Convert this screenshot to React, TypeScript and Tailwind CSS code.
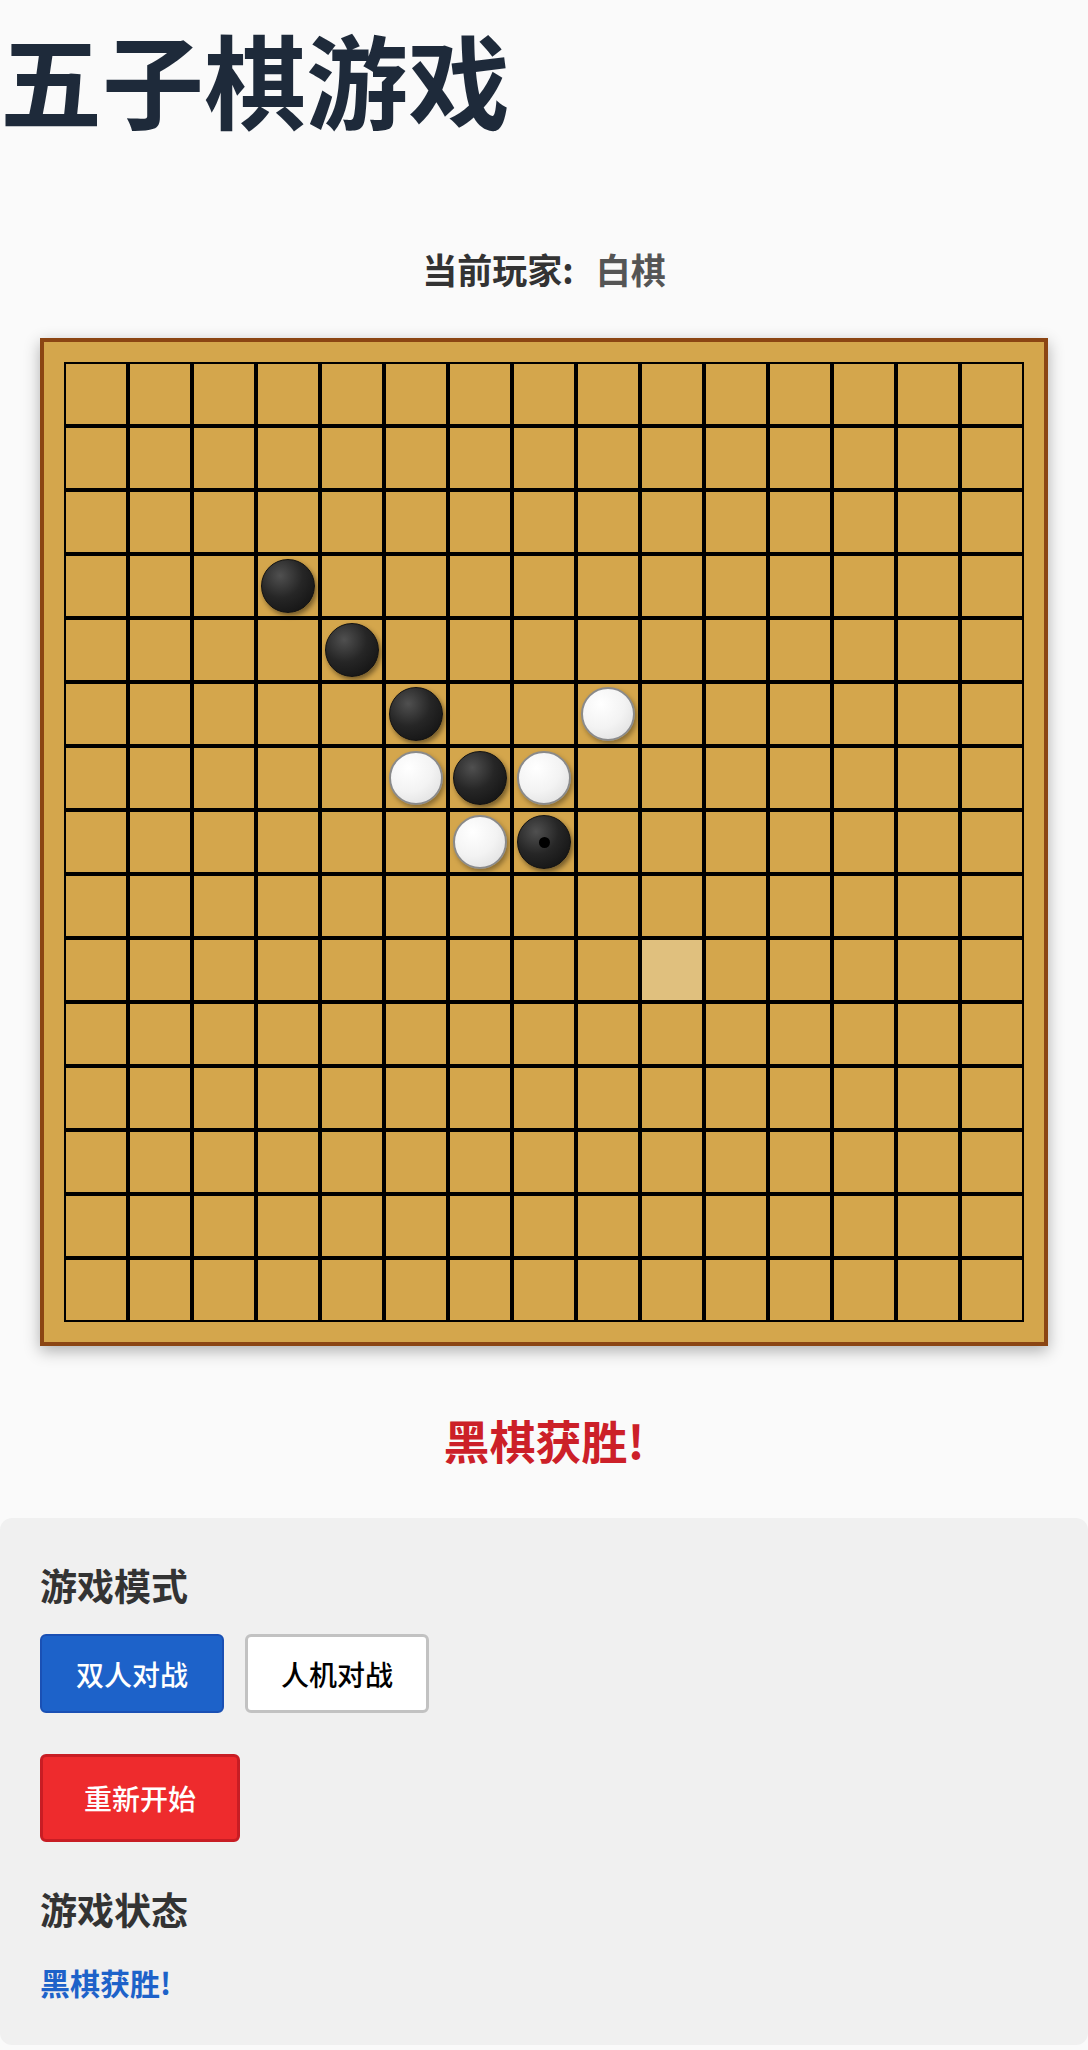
import React from 'react';

type Stone = 'black' | 'white';

const SIZE = 15;

// row, col
const MOVES: [number, number, Stone][] = [
  [3, 3, 'black'],
  [4, 4, 'black'],
  [5, 5, 'black'],
  [5, 8, 'white'],
  [6, 5, 'white'],
  [6, 6, 'black'],
  [6, 7, 'white'],
  [7, 6, 'white'],
  [7, 7, 'black'],
];

const LAST_MOVE = [7, 7];
const HOVER_CELL = [9, 9];

const buildBoard = () => {
  const board: (Stone | null)[][] = Array.from({ length: SIZE }, () => Array(SIZE).fill(null));
  MOVES.forEach(([r, c, s]) => {
    board[r][c] = s;
  });
  return board;
};

const Piece = ({ color, last }: { color: Stone; last?: boolean }) => {
  if (color === 'black') {
    return (
      <div className="flex items-center justify-center w-[54px] h-[54px] rounded-full border border-[#111] bg-[radial-gradient(circle_at_35%_30%,#505050_0%,#262626_45%,#0d0d0d_100%)] shadow-[2px_3px_5px_rgba(0,0,0,0.45)]">
        {last && <div className="w-[11px] h-[11px] rounded-full bg-black" />}
      </div>
    );
  }
  return (
    <div className="w-[54px] h-[54px] rounded-full border-2 border-[#8a8a8a] bg-[radial-gradient(circle_at_35%_30%,#ffffff_0%,#f3f3f3_50%,#dadada_100%)] shadow-[2px_3px_5px_rgba(0,0,0,0.35)]" />
  );
};

const Board = () => {
  const board = buildBoard();
  return (
    <div className="border-4 border-[#8b4513] bg-[#d4a64c] p-5 shadow-[0_5px_15px_rgba(0,0,0,0.3)]">
      <div className="grid grid-cols-[repeat(15,64px)]">
        {board.map((row, r) =>
          row.map((cell, c) => {
            const hover = r === HOVER_CELL[0] && c === HOVER_CELL[1];
            const last = r === LAST_MOVE[0] && c === LAST_MOVE[1];
            return (
              <div
                key={`${r}-${c}`}
                className={
                  hover
                    ? 'flex items-center justify-center w-16 h-16 border-2 border-black bg-[#e0c07e]'
                    : 'flex items-center justify-center w-16 h-16 border-2 border-black'
                }
              >
                {cell && <Piece color={cell} last={last} />}
              </div>
            );
          })
        )}
      </div>
    </div>
  );
};

export default function App() {
  return (
    <div className="min-h-[2050px] bg-[#fafafa] font-['Noto_Sans_CJK_SC',sans-serif]">
      <h1 className="pt-[27px] text-[102px] leading-[102px] font-bold text-[#1e2a3a]">五子棋游戏</h1>

      <div className="mt-[116px] flex justify-center text-[35px] leading-[48px] font-bold">
        <span className="text-[#333]">当前玩家:</span>
        <span className="ml-[22px] text-[#555]">白棋</span>
      </div>

      <div className="mt-[45px] flex justify-center">
        <Board />
      </div>

      <div className="mt-[63px] text-center text-[46px] leading-[60px] font-bold text-[#cc2028]">黑棋获胜!</div>

      <div className="mt-[49px] rounded-xl bg-[#f0f0f0] px-10 pt-[43px] pb-[43px]">
        <h2 className="text-[37px] leading-[48px] font-bold text-[#333]">游戏模式</h2>
        <div className="mt-[25px] flex gap-[21px]">
          <button className="flex items-center justify-center w-[184px] h-[79px] rounded-md border-2 border-[#1a50b4] bg-[#1d62c9] text-[28px] font-medium text-white">
            双人对战
          </button>
          <button className="flex items-center justify-center w-[184px] h-[79px] rounded-md border-[3px] border-[#c2c2c2] bg-white text-[28px] font-medium text-black">
            人机对战
          </button>
        </div>
        <button className="mt-[41px] flex items-center justify-center w-[200px] h-[88px] rounded-md border-[3px] border-[#c81d24] bg-[#ee2b2d] text-[28px] font-medium text-white">
          重新开始
        </button>
        <h2 className="mt-[43px] text-[37px] leading-[48px] font-bold text-[#333]">游戏状态</h2>
        <p className="mt-[29px] text-[30px] leading-[40px] font-bold text-[#1d62c9]">黑棋获胜!</p>
      </div>
    </div>
  );
}
